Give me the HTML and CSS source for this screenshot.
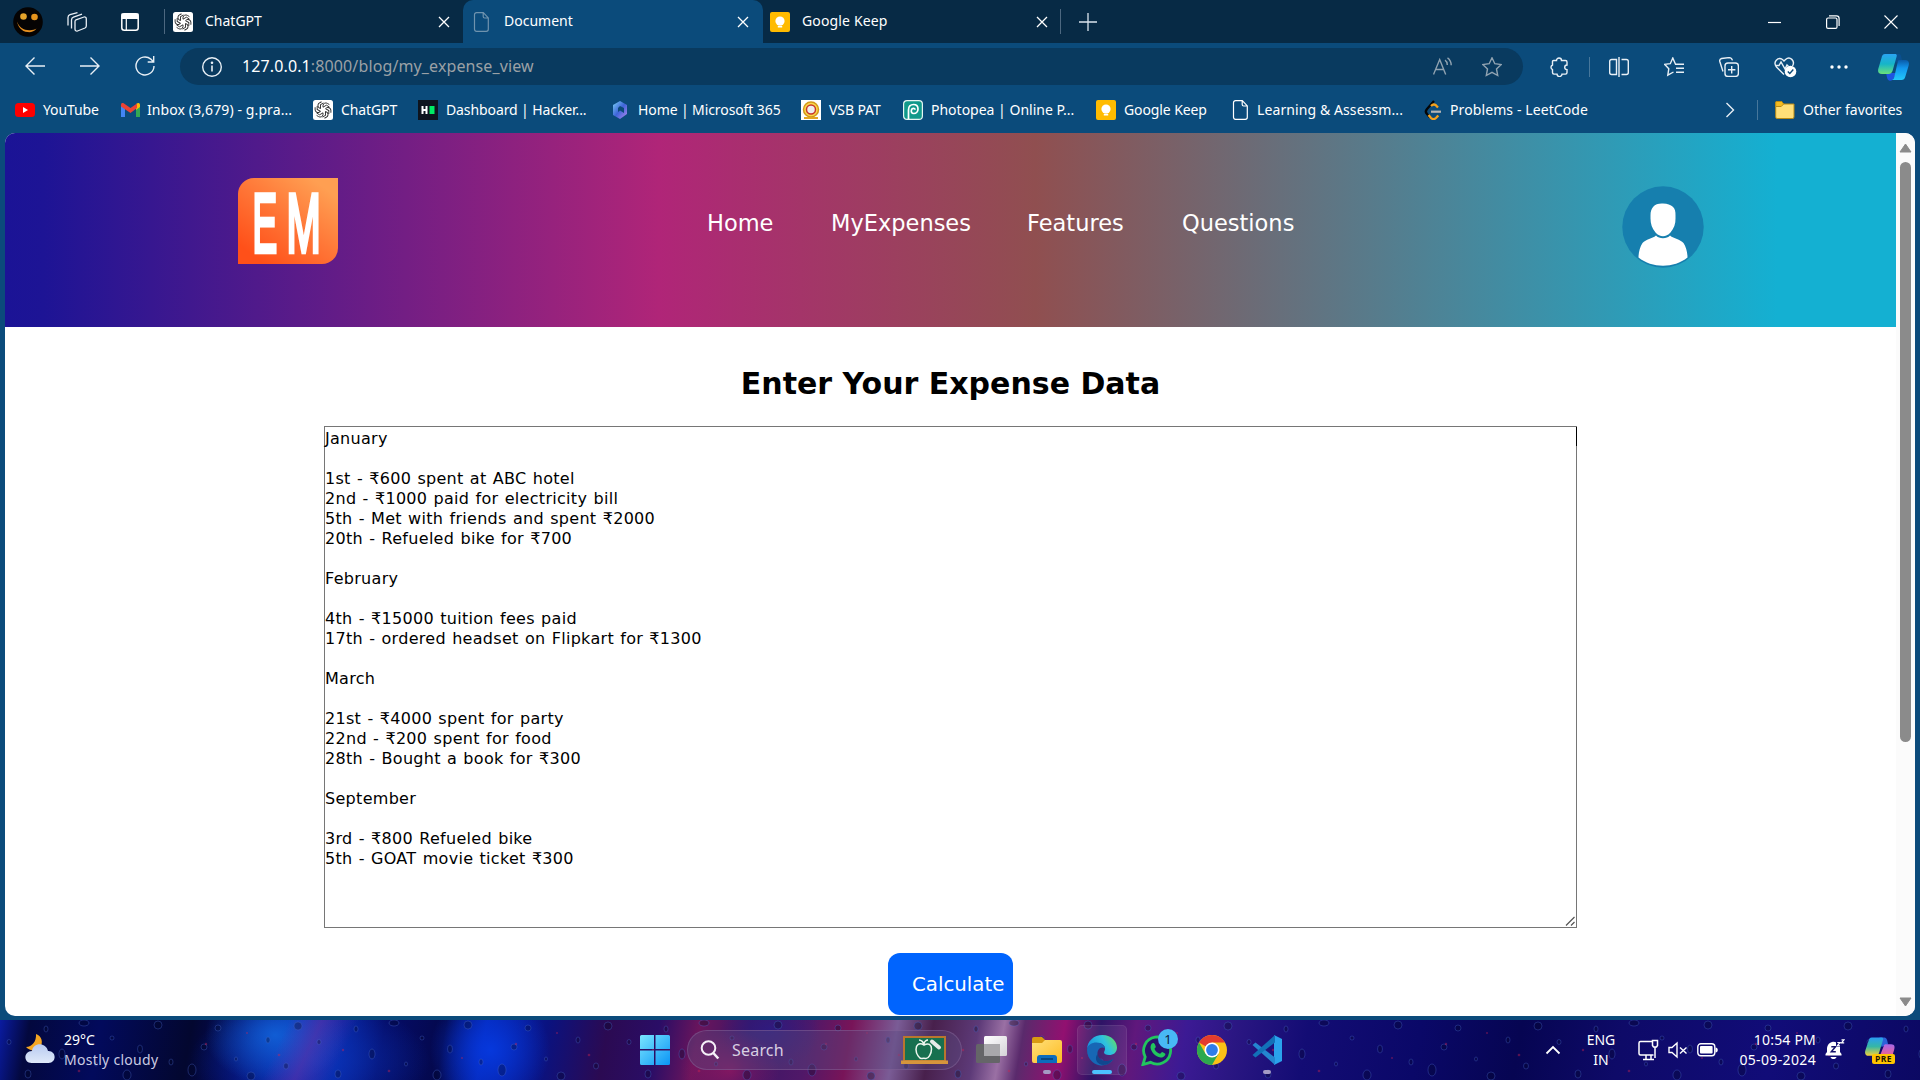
FILE: index.html
```html
<!DOCTYPE html>
<html lang="en">
<head>
<meta charset="utf-8">
<title>Document</title>
<link rel="stylesheet" href="styles.css">
</head>
<body>
<svg width="0" height="0" class="defs">
  <defs>
    <linearGradient id="gLogo" x1="0.15" y1="0.9" x2="0.85" y2="0.1"><stop offset="0" stop-color="#ff5019"/><stop offset=".5" stop-color="#ff7536"/><stop offset="1" stop-color="#ff9f52"/></linearGradient>
    <linearGradient id="gWin" x1="0" y1="0" x2="1" y2="1"><stop offset="0" stop-color="#7ae6ff"/><stop offset="1" stop-color="#0a94f5"/></linearGradient>
    <linearGradient id="gCloud" x1="0" y1="0" x2="0" y2="1"><stop offset="0" stop-color="#b8caf0"/><stop offset="1" stop-color="#dfe9fa"/></linearGradient>
    <linearGradient id="gCopA" x1="0" y1="0" x2="0" y2="1"><stop offset="0" stop-color="#2aa4f2"/><stop offset=".5" stop-color="#16b5c8"/><stop offset="1" stop-color="#6be07a"/></linearGradient>
    <linearGradient id="gCopB" x1="0" y1="0" x2="0" y2="1"><stop offset="0" stop-color="#0a5aa8"/><stop offset=".4" stop-color="#1296ee"/><stop offset="1" stop-color="#24c8fa"/></linearGradient>
    <linearGradient id="gPreA" x1="0" y1="0" x2="0" y2="1"><stop offset="0" stop-color="#2a9df4"/><stop offset=".5" stop-color="#35b7a5"/><stop offset="1" stop-color="#f5d13a"/></linearGradient>
    <linearGradient id="gPreB" x1="0" y1="0" x2="0" y2="1"><stop offset="0" stop-color="#a667e8"/><stop offset="1" stop-color="#f6608a"/></linearGradient>
    <linearGradient id="g365" x1="0" y1="0" x2="1" y2="1"><stop offset="0" stop-color="#7ad0f5"/><stop offset=".5" stop-color="#3e64d8"/><stop offset="1" stop-color="#b487f0"/></linearGradient>
    <linearGradient id="gEdge" x1="0" y1=".6" x2="1" y2=".2"><stop offset="0" stop-color="#168fdc"/><stop offset=".6" stop-color="#2fc2df"/><stop offset="1" stop-color="#62de62"/></linearGradient>
    <linearGradient id="gFold" x1="0" y1="0" x2="1" y2="1"><stop offset="0" stop-color="#ffe07a"/><stop offset="1" stop-color="#fdbb22"/></linearGradient>
    <linearGradient id="gView" x1="0" y1="0" x2="1" y2="1"><stop offset="0" stop-color="#fff"/><stop offset="1" stop-color="#d5d3d8"/></linearGradient>
    <symbol id="gpt" viewBox="0 0 20 20"><rect width="20" height="20" rx="2.5" fill="#fff"/><g fill="none" stroke="#222" stroke-width=".9"><g id="petal"><path d="M10 7.2V5.3a2.9 2.9 0 0 1 4.4-1.9l2 1.2M10 7.2l3.4-2 3 1.8"/></g><use href="#petal" transform="rotate(60 10 10)"/><use href="#petal" transform="rotate(120 10 10)"/><use href="#petal" transform="rotate(180 10 10)"/><use href="#petal" transform="rotate(240 10 10)"/><use href="#petal" transform="rotate(300 10 10)"/></g></symbol>
    <symbol id="keep" viewBox="0 0 20 20"><rect width="20" height="20" rx="2" fill="#ffbb00"/><circle cx="10" cy="9" r="4.6" fill="#fff"/><path d="M7.8 11h4.4v2H7.8zM7.8 13.8h4.4v1.7H7.8z" fill="#fff"/></symbol>
    <symbol id="doc" viewBox="0 0 20 20"><path d="M4.500.7h6.8l5 5.200v11.400a2 2 0 0 1-2 2H4.500a2 2 0 0 1-2-2V2.700a2 2 0 0 1 2-2zM11.200.9v3.600a1.500 1.500 0 0 0 1.500 1.500h3.500" fill="none" stroke="currentColor" stroke-width="1.2"/></symbol>
    <symbol id="x" viewBox="0 0 12 12"><path d="M1 1l10 10M11 1L1 11" stroke="currentColor" stroke-width="1.3" fill="none"/></symbol>
    <pattern id="drops" width="310" height="60" patternUnits="userSpaceOnUse">
      <g fill="#01041f" fill-opacity=".3" stroke="#4a6bd8" stroke-opacity=".4" stroke-width=".8">
        <ellipse cx="9" cy="22" rx="2" ry="2.500"/><ellipse cx="28" cy="54" rx="3" ry="4"/><ellipse cx="46" cy="9" rx="2" ry="3"/><ellipse cx="62" cy="34" rx="3" ry="5"/><ellipse cx="84" cy="3" rx="5" ry="3"/><ellipse cx="96" cy="44" rx="1.500" ry="2"/><ellipse cx="112" cy="18" rx="2" ry="2"/><ellipse cx="127" cy="55" rx="4" ry="5"/><ellipse cx="140" cy="29" rx="2.500" ry="4"/><ellipse cx="158" cy="5" rx="4" ry="4"/><ellipse cx="171" cy="42" rx="2" ry="3"/><ellipse cx="192" cy="50" rx="4" ry="6"/><ellipse cx="204" cy="27" rx="3" ry="3"/><ellipse cx="218" cy="8" rx="3" ry="3"/><ellipse cx="236" cy="39" rx="1.500" ry="2"/><ellipse cx="251" cy="56" rx="4" ry="4"/><ellipse cx="268" cy="20" rx="2" ry="3"/><ellipse cx="286" cy="46" rx="2.500" ry="3"/><ellipse cx="298" cy="6" rx="4" ry="4"/>
      </g>
      <g fill="#d5204e" fill-opacity=".4"><circle cx="33" cy="30" r="1.200"/><circle cx="79" cy="51" r="1.300"/><circle cx="152" cy="38" r="1"/><circle cx="206" cy="24" r="1.200"/><circle cx="247" cy="13" r="1"/><circle cx="279" cy="35" r="1.300"/></g>
    </pattern>
  </defs>
</svg>

<div class="screen">
  <div class="tabstrip">
    <div class="tools">
      <svg class="face" width="30" height="30" viewBox="0 0 30 30"><circle cx="15" cy="15" r="14.800" fill="#050303"/><circle cx="10.500" cy="9.500" r="3.300" fill="#e5a32a"/><circle cx="21.500" cy="10" r="3.300" fill="#e5931c"/><path d="M4 14.500c2 6 7 9 13 8.700 2.500 0 5-.8 6.500-1.700-2 3-5.500 4-9 3.600C8.500 24.300 5 20 4 14.500z" fill="#e58f20"/></svg>
      <svg class="spaces" width="22" height="20" viewBox="0 0 22 20" fill="none" stroke="#e8eef4" stroke-width="1.300"><path d="M9 9.500a2 2 0 0 1 1-1.700L18 5a1.800 1.800 0 0 1 2.300 1.700V14a2.200 2.200 0 0 1-1.300 2l-7.500 3A1.800 1.800 0 0 1 9 17.300zM5.500 16.500V8a3 3 0 0 1 2-2.800L16 2.200M2 13.500V5.500a3 3 0 0 1 2-2.800L11.500.7"/></svg>
      <svg class="acts" width="18" height="18" viewBox="0 0 18 18"><rect x=".8" y=".8" width="16.400" height="16.400" rx="2.500" fill="none" stroke="#fff" stroke-width="1.500"/><path d="M1 1h16v4.500H1zM5.300 5v12" fill="#fff" stroke="#fff" stroke-width="1.200"/></svg>
      <i class="rule"></i>
    </div>
    <div class="tab tab-a"><svg width="20" height="20"><use href="#gpt"/></svg><span>ChatGPT</span><svg class="close" width="12" height="12"><use href="#x"/></svg></div>
    <div class="tab active"><svg class="dim" width="20" height="20"><use href="#doc"/></svg><span>Document</span><svg class="close" width="12" height="12"><use href="#x"/></svg></div>
    <div class="tab tab-c"><svg width="20" height="20"><use href="#keep"/></svg><span>Google Keep</span><svg class="close" width="12" height="12"><use href="#x"/></svg><i class="rule"></i></div>
    <svg class="plus" width="18" height="18" viewBox="0 0 18 18"><path d="M9 0v18M0 9h18" stroke="#dbe5ee" stroke-width="1.300"/></svg>
    <div class="winbtns">
      <svg width="14" height="14" viewBox="0 0 14 14"><path d="M0 7.500h13" stroke="#fff" stroke-width="1.200"/></svg>
      <svg width="14" height="14" viewBox="0 0 14 14" fill="none" stroke="#fff" stroke-width="1.200"><rect x=".6" y="3" width="10.400" height="10.400" rx="1.500"/><path d="M3 .8h7.500a2.600 2.600 0 0 1 2.600 2.600V11"/></svg>
      <svg width="14" height="14" viewBox="0 0 14 14"><path d="M.5.5l13 13M13.500.5l-13 13" stroke="#fff" stroke-width="1.100"/></svg>
    </div>
  </div>

  <div class="toolbar">
    <svg class="nav1" width="20" height="20" viewBox="0 0 20 20"><path d="M9.500 1.500L1 10l8.500 8.500M1 10h19"/></svg>
    <svg class="nav2" width="20" height="20" viewBox="0 0 20 20"><path d="M10.500 1.500L19 10l-8.500 8.500M19 10H0"/></svg>
    <svg class="nav3" width="20" height="20" viewBox="0 0 20 20"><path d="M19 10a9 9 0 1 1-3.200-6.900l2.600 2.600M18.700 0v6h-6"/></svg>
    <div class="address">
      <svg width="20" height="20" viewBox="0 0 20 20"><circle cx="10" cy="10" r="9.300"/><path d="M10 8.500v6" stroke-width="1.600"/><circle cx="10" cy="5.800" r=".6" fill="#fff"/></svg>
      <span class="url"><b>127.0.0.1</b>:8000/blog/my_expense_view</span>
      <svg class="aloud" width="20" height="20" viewBox="0 0 20 20"><path d="M.5 17.500L6.700 2.500l6 15M2.800 12.500h8M12 3.200c1.600 1 2.300 2.500 2.300 4.800M14.500.8c2.500 1.700 3.700 4.400 3.700 7.500"/></svg>
      <svg class="star" width="20" height="20" viewBox="0 0 20 20"><path d="M10 .8l2.800 5.900 6.400.8-4.700 4.500 1.200 6.500L10 15.300 4.300 18.500 5.500 12 .8 7.500l6.400-.8z"/></svg>
    </div>
    <svg class="ext" width="20" height="20" viewBox="0 0 20 20"><path d="M4.500 3.500h3a2.500 2.500 0 0 1 5 0H16.500a1.500 1.500 0 0 1 1.500 1.500v3a2.300 2.300 0 0 0 0 4.600v3a1.500 1.500 0 0 1-1.500 1.500H13a2.500 2.500 0 0 1-5 0H5a1.500 1.500 0 0 1-1.500-1.500v-3a2.500 2.500 0 0 1 0-4.600V4.500a1 1 0 0 1 1-1z"/></svg>
    <i class="sep"></i>
    <svg class="split" width="20" height="20" viewBox="0 0 20 20"><path d="M7.500 2.500H2.700a2 2 0 0 0-2 2v11a2 2 0 0 0 2 2h4.800zM12.500 2.500h4.800a2 2 0 0 1 2 2v11a2 2 0 0 1-2 2h-4.800M10 0v20"/></svg>
    <svg class="favs" width="20" height="20" viewBox="0 0 20 20"><path d="M11.500 7.200L8.800 1 6.300 6.700.6 7.300l4.200 4.400-1 6.500L9.500 15M11 7.300h9M12 11.300h8M12 15.300h8"/></svg>
    <svg class="coll" width="20" height="20" viewBox="0 0 20 20"><rect x="6" y="6" width="13.400" height="13.400" rx="3"/><path d="M12.700 9v7.400M9 12.700h7.400M4 14.500L.8 4.500a2.500 2.500 0 0 1 1.800-3L10 .6c2 0 3 1.200 3.500 2.800"/></svg>
    <svg class="heart" width="23" height="22" viewBox="0 0 23 22"><path d="M10 18.500L2.500 11C-1.500 6 4 .5 8.500 3.500L10 5l1.500-1.500C16-.5 21.500 5 18.500 10M1 9.500h4l2-3.500 4 7 2-4 1.500 1.500"/><circle cx="16.500" cy="15.500" r="5.800" fill="#fff" stroke="none"/><path class="tick" d="M13.800 15.500l2 2 3.500-4"/></svg>
    <svg class="dots" width="18" height="6" viewBox="0 0 18 6"><g fill="#fff" stroke="none"><circle cx="2" cy="3" r="1.700"/><circle cx="9" cy="3" r="1.700"/><circle cx="16" cy="3" r="1.700"/></g></svg>
    <svg class="cop" width="31" height="28" viewBox="0 0 31 28"><g stroke="none"><path d="M15 1h6c2 0 2 2 3 6l-7 3z" fill="#0a4f8e"/><path d="M8 20h10l-2 5c-1 2.500-3 3-5 2.500-2-.8-2-4-3-7.500z" fill="#1e55e0"/><path d="M7 1h10c2 0 2 1.500 1.500 3l-4 14c-.8 2-2 3-4 3H4c-4 0-4.500-3-3.500-6l3-10C4 2.500 5 1 7 1z" fill="url(#gCopA)"/><path d="M21 7h6c4 0 4.500 3 3.500 6l-3 10c-.8 3-2 4-4 4H14c2-.8 2-2 2.500-4l3-13c.3-2 .7-3 1.500-3z" fill="url(#gCopB)"/></g></svg>
  </div>

  <div class="bookmarks">
    <a><svg width="20" height="20"><rect y="3" width="20" height="14" rx="3.500" fill="#f00"/><path d="M8 7l5 3-5 3z" fill="#fff"/></svg><span>YouTube</span></a>
    <a class="wide"><svg width="19" height="20"><path d="M0 5v12h4V8z" fill="#4285f4"/><path d="M19 5v12h-4V8z" fill="#34a853"/><path d="M15 4l2-1c1.500-.5 2 1 2 2v2l-4 3z" fill="#fbbc04"/><path d="M0 5c0-2 1.500-2.500 3-1.500L9.500 8 16 3.500V8l-6.500 5L0 6.500z" fill="#ea4335"/></svg><span>Inbox (3,679) - g.pra...</span></a>
    <a><svg width="20" height="20"><use href="#gpt"/></svg><span>ChatGPT</span></a>
    <a><svg width="20" height="20"><path d="M0 0h20v20H0z" fill="#0e141e"/><path d="M3.500 6H5.500v3h2V6h2v8h-2v-3h-2v3h-2z" fill="#fff"/><path d="M11.500 6h5v8h-5z" fill="#00ea64"/></svg><span>Dashboard | Hacker...</span></a>
    <a><svg width="20" height="20"><path d="M10 1l7 4v9l-7 5-7-4V5z" fill="url(#g365)"/><path d="M10 6l4 2v5l-4-2.500L8 12V8z" fill="#0b4a79"/></svg><span>Home | Microsoft 365</span></a>
    <a><svg width="20" height="20"><path d="M0 0h20v20H0z" fill="#fff"/><circle cx="10" cy="9.500" r="7.500" fill="#fbd84d" stroke="#d49a18" stroke-width="1.500"/><circle cx="10" cy="9.500" r="4.500" fill="#eee" stroke="#c8362c" stroke-width="1.500"/><path d="M3 18h14" stroke="#e2a622" stroke-width="2"/></svg><span>VSB PAT</span></a>
    <a class="mid"><svg width="20" height="20"><rect x=".6" y=".6" width="18.800" height="18.800" rx="3.500" fill="#10998a" stroke="#e5f5f2" stroke-width="1.200"/><path d="M5.500 19V10c0-3.500 2-5.500 5-5.500s4.500 2 4.500 4.500-1.800 4.500-4.200 4.500S8 11.500 8.500 9.800s3.500-2 3.500 0" fill="none" stroke="#fff" stroke-width="1.700"/></svg><span>Photopea | Online P...</span></a>
    <a><svg width="20" height="20"><use href="#keep"/></svg><span>Google Keep</span></a>
    <a class="wide tight"><svg width="20" height="20"><use href="#doc"/></svg><span>Learning &amp; Assessm...</span></a>
    <a class="wide"><svg width="20" height="20"><path d="M11 1L4 9c-1.800 2-1.500 3.500 0 5l3 3.500" fill="none" stroke="#050505" stroke-width="2.300"/><path d="M15 7.500L12.500 5C11 4 9.500 4.500 8 6M5.500 15L8 18c1.500 1.300 3.500 1.300 5 0l2.300-2.600" fill="none" stroke="#f5a11c" stroke-width="2.300"/><path d="M8 11.700h10" stroke="#b5b5b5" stroke-width="2.200"/></svg><span>Problems - LeetCode</span></a>
    <svg class="more" width="10" height="16" viewBox="0 0 10 16"><path d="M1.500 1l7 7-7 7" fill="none" stroke="#e8eef4" stroke-width="1.400"/></svg>
    <i class="bsep"></i>
    <a class="mid"><svg width="20" height="20"><path d="M.7 2.500a1 1 0 0 1 1-1h5l2 2.500H19v13a1.500 1.500 0 0 1-1.500 1.500h-15A1.500 1.500 0 0 1 .7 17z" fill="#ffdf78" stroke="#b98a14"/><path d="M.7 2.500a1 1 0 0 1 1-1h5l2 2.500-2.500 2.500H.7z" fill="#f5bc20" stroke="#b98a14"/></svg><span>Other favorites</span></a>
  </div>

  <div class="viewport">
    <div class="page">
      <header class="hero">
        <svg class="logo" width="100" height="86" viewBox="0 0 100 86"><path d="M16 0h84v70a16 16 0 0 1-16 16H0V16A16 16 0 0 1 16 0z" fill="url(#gLogo)"/><g fill="#fff" stroke="#fff" font-family="Liberation Sans" font-size="84"><text transform="translate(14.500 73.500) scale(.44 1)" stroke-width="4.500">E</text><text transform="translate(48.500 73.500) scale(.49 1)" stroke-width="4.500">M</text></g></svg>
        <nav class="menu"><a class="m1">Home</a><a class="m2">MyExpenses</a><a class="m3">Features</a><a class="m4">Questions</a></nav>
        <svg class="user" width="82" height="82" viewBox="0 0 82 82"><circle cx="41" cy="41" r="40.700" fill="#167fae"/><path d="M41 17.500c9 .5 13 4 12.500 12v3c.2 5-1.500 10-5 14-4.500 5-10.500 5-15 0-3.500-4-5-9-5-14v-3c0-8 4-12.500 12.500-12z" fill="#fff"/><path d="M34 49.500c3 3.500 11 3.500 14 0 4 3.500 10 3.500 13.500 7.500 2.500 4 4 9 4 14.500C52 82.500 30 82.500 16.500 71.500c0-5.500 1.500-10.500 4-14.500 3.500-4 9.500-4 13.500-7.500z" fill="#fff"/></svg>
      </header>
      <main class="main">
        <h1>Enter Your Expense Data</h1>
        <div class="entry"><pre>January

1st - ₹600 spent at ABC hotel
2nd - ₹1000 paid for electricity bill
5th - Met with friends and spent ₹2000
20th - Refueled bike for ₹700

February

4th - ₹15000 tuition fees paid
17th - ordered headset on Flipkart for ₹1300

March

21st - ₹4000 spent for party
22nd - ₹200 spent for food
28th - Bought a book for ₹300

September

3rd - ₹800 Refueled bike
5th - GOAT movie ticket ₹300</pre><i class="caret"></i><svg class="grip" width="10" height="10"><path d="M1 9.500L9.500 1M6 9.500L9.500 6" stroke="#555" stroke-width="1.200"/></svg></div>
        <div class="calc"><span>Calculate</span></div>
      </main>
    </div>
    <div class="scroll">
      <svg width="13" height="10" viewBox="0 0 13 10"><path d="M6.500 1L12 9H1z" fill="#8b8b8b" stroke="#8b8b8b" stroke-linejoin="round"/></svg>
      <i class="thumb"></i>
      <svg class="down" width="13" height="10" viewBox="0 0 13 10"><path d="M6.500 9L12 1H1z" fill="#8b8b8b" stroke="#8b8b8b" stroke-linejoin="round"/></svg>
    </div>
  </div>

  <div class="taskbar">
    <svg class="rain" width="1920" height="60"><rect width="1920" height="60" fill="url(#drops)"/></svg>
    <div class="weather">
      <svg width="32" height="32" viewBox="0 0 32 32"><path d="M12 1c6 2 7.500 9 4 13.500-3 4-10 4-14-.5 6-.5 10.500-5 10-13z" fill="#f5a623"/><path d="M7.500 30C-1 30-.5 18 8 18c1-9 14-9 16 0 8.500-.5 9 12 .500 12z" fill="url(#gCloud)"/></svg>
      <div><p class="t1">29°C</p><p class="t2">Mostly cloudy</p></div>
    </div>
    <div class="apps">
      <svg class="start" width="30" height="30" viewBox="0 0 30 30"><path d="M0 1.500A1.500 1.500 0 0 1 1.500 0H14v14H0zM15.500 0h13A1.500 1.500 0 0 1 30 1.500V14H15.500zM0 15.500h14V30H1.500A1.500 1.500 0 0 1 0 28.500zM15.500 15.500H30v13a1.500 1.500 0 0 1-1.500 1.500h-13z" fill="url(#gWin)"/></svg>
      <div class="search">
        <svg width="20" height="20" viewBox="0 0 20 20" fill="none" stroke="#f5f0f8" stroke-width="2"><circle cx="8.500" cy="8" r="6.800"/><path d="M13.300 13l5 5.500" stroke-width="2.600"/></svg>
        <span>Search</span>
        <svg class="board" width="48" height="28" viewBox="0 0 48 28"><path d="M2 0h43v26H2z" fill="#b9762e"/><path d="M4 2h39v22H4z" fill="#17704f"/><path d="M0 24.500h47V28H0z" fill="#d6953c"/><path d="M23 9c-5-3-8 0-8 4.500S18.500 23 21 22.500c1.500-.5 2-.5 3.500 0 3 .5 6-5 6-9.500S27.500 6.500 23 9zM23 9c0-3-3-5-5-5M23 8c0-2 2-4 4-4" fill="none" stroke="#eef7ee" stroke-width="1.500"/><path d="M31 5.500l7 6" stroke="#e8ece8" stroke-width="4" stroke-linecap="round"/></svg>
      </div>
      <div class="app view"><svg width="32" height="32" viewBox="0 0 32 32"><rect y="10" width="24" height="19" rx="1.500" fill="#656568"/><rect x="8" y="2" width="23" height="20" rx="1.500" fill="url(#gView)"/><path d="M8 10h16v12H8z" fill="#a9a8ac"/></svg></div>
      <div class="app on"><svg width="32" height="32" viewBox="0 0 32 32"><path d="M1 5a2 2 0 0 1 2-2h8l3 3v6H1z" fill="#d99a12"/><path d="M1 9h10l3-3h15a2 2 0 0 1 2 2v19a2 2 0 0 1-2 2H3a2 2 0 0 1-2-2z" fill="url(#gFold)"/><path d="M6 29v-5a3 3 0 0 1 3-3h14a3 3 0 0 1 3 3v5z" fill="#0c6cbd"/><path d="M10 25h12" stroke="#063d72" stroke-width="1.500"/></svg></div>
      <div class="app cur"><svg width="32" height="32" viewBox="0 0 32 32"><path d="M1 16C1 7 8 1 16.500 1 26 1 31 8 31 13.500c0 5-3.500 7.500-8 7.500-3 0-5-1-5-2.500 0-1 1-1.500 1-4C19 11 15 9 11.500 9 6 9 1 12 1 16z" fill="url(#gEdge)"/><path d="M1 16c0-5 5-7.500 9.500-7.500 5 0 8.500 3 8.500 6-4-3-8 1-7.500 6 .6 6 8 9 16 4.500C22 33 12 33 6.500 28 3 25 1 21 1 16z" fill="#1767b5"/><path d="M11.500 20c.6 6 8 9.500 16 5-5 7-11 6.500-14 5-4-2-4.500-7-2-10z" fill="#10478f"/></svg></div>
      <div class="app"><svg width="32" height="32" viewBox="0 0 32 32"><path d="M2 30.500l2.200-7.600A13.500 13.500 0 1 1 9.500 28.300z" fill="#100c5c" fill-opacity=".6" stroke="#22c55e" stroke-width="2.800"/><path d="M11 9.500c1-1 2.500-.5 3 1l.8 2.200c0 1-1.500 1.500-1.300 2.300 1.200 2.500 3 4 5.300 4.800 1 0 1.500-1.800 2.500-1.800l2.700 1.500c1.300 1-1 4.300-4.500 4-5-.8-9.500-5.500-10-10 0-1.800.5-3 1.500-4z" fill="#22c55e"/></svg><b class="count">1</b></div>
      <div class="app"><svg width="32" height="32" viewBox="0 0 32 32"><circle cx="16" cy="16" r="15" fill="#fbc116"/><path d="M16 16L3 8.500A15 15 0 0 1 29 8.500H16z" fill="#e33b2e"/><path d="M16 16L9.500 19.800 3 8.500A15 15 0 0 0 16 31l6.500-11.300z" fill="#2da94f"/><circle cx="16" cy="16" r="7.500" fill="#fff"/><circle cx="16" cy="16" r="5.900" fill="#2f7de9"/></svg></div>
      <div class="app on"><svg width="32" height="32" viewBox="0 0 32 32"><path d="M23 1l8 4v22l-8 4z" fill="#2aa2ec"/><path d="M1.500 11l3-2.500L24 23.500V31z" fill="#2486d0"/><path d="M1.500 21l3 2.500L24 8.500V1z" fill="#1271b8"/></svg></div>
    </div>
    <div class="tray">
      <svg class="chev" width="16" height="10" viewBox="0 0 16 10"><path d="M1.500 8.500L8 2l6.500 6.500" fill="none" stroke="#fff" stroke-width="1.800"/></svg>
      <div class="lang"><p>ENG</p><p>IN</p></div>
      <svg class="net" width="22" height="22" viewBox="0 0 22 22" fill="none" stroke="#fff" stroke-width="1.500"><path d="M14 2.500H2.500a1.500 1.500 0 0 0-1.500 1.500v10.500A1.500 1.500 0 0 0 2.500 16h13M5 20.500h11M8 16v4M13 16v4"/><path d="M14.500 1.500h5v5l-1 1.500h-3l-1-1.500zM17 8v11"/></svg>
      <svg class="vol" width="20" height="18" viewBox="0 0 20 18" fill="none" stroke="#fff" stroke-width="1.400"><path d="M1 6.500h3L9 2v14l-5-4.500H1zM12 6.500l6.500 6M18.500 6.500l-6.500 6"/></svg>
      <svg class="bat" width="22" height="14" viewBox="0 0 22 14"><rect x=".8" y=".8" width="17" height="12" rx="3" fill="none" stroke="#fff" stroke-width="1.400"/><rect x="3" y="3" width="12.600" height="7.600" rx="1" fill="#fff"/><path d="M18.500 4.500c3 0 3 5 0 5z" fill="#fff"/></svg>
      <div class="clock"><p>10:54 PM</p><p class="date">05-09-2024</p></div>
      <svg class="bell" width="20" height="22" viewBox="0 0 20 22"><path d="M.5 16.500V15L2 13V9.500a6.700 6.700 0 0 1 9-6.300V8h4v5l1.500 2v1.500zM5.500 18h6c-.7 2.700-5.300 2.700-6 0z" fill="#fff"/><path d="M6.300 7.800h4.200l-4.200 5h4.500" fill="none" stroke="#15126a" stroke-width="1.500"/><path d="M12.300 3.500h2.700l-2.700 3.300H15M16.500.8h2.500l-2.500 3h2.700" fill="none" stroke="#fff" stroke-width="1.200"/></svg>
      <div class="pre"><svg width="30" height="28" viewBox="0 0 31 28"><path d="M15 1h5c3 0 3 4 4 7l-7 3z" fill="#2b62d8"/><path d="M7 1h10c2 0 2 1.500 1.500 3l-4 13c-.8 2-2 3-4 3H4c-4 0-4.500-3-3.500-6l3-9C4 2.500 5 1 7 1z" fill="url(#gPreA)"/><path d="M21 8h6c4 0 4 3 3 6l-2 7H15l4-10c.5-2 1-3 2-3z" fill="url(#gPreB)"/></svg><b>PRE</b></div>
    </div>
  </div>
</div>
</body>
</html>
```
FILE: styles.css
```css
* { box-sizing: border-box; }
body { margin: 0; background: #0b4a79; overflow: hidden; }
p, h1, pre { margin: 0; }
svg { display: block; flex: none; }
.defs { position: absolute; }

.screen {
  width: 1920px; height: 1080px;
  display: flex; flex-direction: column;
  font: 14px "Noto Sans", sans-serif;
  color: #fff; background: #0b4b7b;
}

/* tab strip */
.tabstrip { height: 43px; display: flex; align-items: center; background: #072a45; flex: none; }
.tools { width: 165px; display: flex; align-items: center; padding-left: 13px; }
.spaces { margin-left: 23px; }
.acts { margin-left: 33px; }
.tools .rule { margin-left: 25px; }
.rule { width: 1px; height: 25px; background: #4d6880; flex: none; }
.tab { height: 43px; display: flex; align-items: center; gap: 12px; }
.tab span { line-height: 20px; margin-top: -2px; letter-spacing: 0; white-space: nowrap; }
.tab-a { width: 298px; padding: 0 13px 0 8px; }
.active { width: 300px; padding: 0 14px 0 9px; background: #0b4b7b; border-radius: 10px 10px 0 0; }
.tab-c { width: 298px; padding-left: 7px; }
.tab-c span { letter-spacing: .15px; }
.close { margin-left: auto; }
.dim { color: #6f93ae; }
.plus { margin-left: 18px; }
.winbtns { margin-left: auto; display: flex; gap: 44px; padding-right: 22px; }

/* toolbar */
.toolbar { height: 47px; display: flex; align-items: center; padding: 0 11px 0 25px; flex: none; }
.toolbar svg { fill: none; stroke: #e9f0f6; stroke-width: 1.4; }
.toolbar .tick { stroke: #0b4a79; }
.nav2, .nav3 { margin-left: 35px; }
.nav1, .nav2, .nav3 { margin-top: -1px; }
.address { margin-left: 25px; width: 1343px; height: 37px; border-radius: 19px; background: #093a5f; display: flex; align-items: center; padding: 0 21px 0 22px; }
.url { margin-left: 20px; margin-top: -1px; font-size: 16px; color: #9ba1a6; letter-spacing: .12px; white-space: nowrap; }
.url b { font-weight: 400; color: #fff; }
.address .aloud, .address .star { stroke: #91a3b1; }
.aloud { margin-left: auto; }
.star { margin-left: 29px; }
.ext { margin-left: 26px; }
.sep { width: 1px; height: 20px; background: #47779b; margin: 0 19px 0 20px; flex: none; }
.favs, .coll, .heart { margin-left: 35px; }
.dots { margin-left: 33px; }
.cop { margin-left: auto; }

/* favourites bar */
.bookmarks { height: 43px; display: grid; align-items: center; flex: none; padding: 0 0 3px 15px;
  grid-template-columns: 106px 192px 105px 192px 191px 102px 193px 135px 192px 302px 32px 18px auto; }
.bookmarks a { display: flex; align-items: center; gap: 8px; white-space: nowrap; letter-spacing: -.1px; }
.bookmarks span { margin-top: -1px; }
.bookmarks .mid { letter-spacing: 0; }
.bookmarks .wide { letter-spacing: .1px; gap: 7px; }
.bookmarks .tight { gap: 6px; }
.bsep { width: 1px; height: 20px; background: #47779b; }

/* page viewport */
.viewport { height: 883px; width: 1910px; margin-left: 5px; display: flex; border-radius: 10px; overflow: hidden; background: #fff; flex: none; }
.page { width: 1891px; font-family: "DejaVu Sans", sans-serif; color: #000; }
.hero { height: 194px; display: flex; align-items: flex-start; padding: 45px 192px 0 233px;
  background: linear-gradient(90deg, #1b1396 0, #1d1495 2%, #b02578 34.600%, #904f50 54.500%, #14b0d2 93.700%); }
.logo { overflow: visible; }
.menu { display: flex; margin: 30px 0 0 369px; color: #fff; font-size: 22.5px; line-height: 30px; }
.m1 { width: 124px; }
.m2 { width: 196px; }
.m3 { width: 155px; }
.user { margin: 8px 0 0 auto; }
.main { display: flex; flex-direction: column; align-items: center; }
h1 { margin-top: 37px; font-size: 30px; line-height: 40px; font-weight: 700; white-space: nowrap; }
.entry { position: relative; margin-top: 22px; width: 1253px; height: 502px; border: 1px solid #767676; padding: 2px 0 0; }
.entry pre { font: 16px/20px "DejaVu Sans", sans-serif; letter-spacing: .3px; word-spacing: .85px; }
.caret { position: absolute; right: -1px; top: 0; width: 1px; height: 19px; background: #000; }
.grip { position: absolute; right: 1px; bottom: 1px; }
.calc { width: 125px; height: 62px; margin-top: 25px; border-radius: 12px; background: #0064fe; color: #fff; padding: 1px 0 0 24px; font-size: 19.800px; line-height: 62px; }
.scroll { width: 19px; background: #fbfbfb; display: flex; flex-direction: column; align-items: center; padding: 10px 0 9px; }
.thumb { width: 11px; height: 580px; margin-top: 9px; border-radius: 6px; background: #8b8b8b; }
.down { margin-top: auto; }

/* taskbar */
.taskbar { position: relative; margin-top: auto; height: 60px; display: flex; flex: none;
  background:
    linear-gradient(115deg, transparent 262px, #6a2aa088 292px, transparent 325px),
    radial-gradient(70px 50px at 275px 15px, #1265dcdd, transparent),
    radial-gradient(120px 60px at 310px 40px, #0a38c0cc, transparent),
    radial-gradient(60px 60px at 490px 30px, #0638dc, transparent),
    radial-gradient(50px 40px at 730px 50px, #a01860aa, transparent),
    radial-gradient(50px 40px at 770px 10px, #2a1c84cc, transparent),
    linear-gradient(100deg, #0a1ba0 0, #03083e 30px, #020a5c 100px, #03072f 190px, #040a60 240px, #0a2cb0 300px, #08229c 340px, #050c68 380px, #04084c 440px, #0525b4 480px, #0a1280 540px, #2b0a52 600px, #2a0d66 650px, #6a155c 690px, #3a1566 740px, #501868 800px, #781458 840px, #7a5c96 885px, #48204c 920px, #5d3a78 965px, #9a70a4 990px, #5a2a6c 1010px, #921070 1050px, #2e1466 1085px, #60187c 1120px, #3c1a94 1170px, #2a1682 1220px, #130c74 1290px, #0a0868 1400px, #060552 1500px, #0e0a68 1600px, #110c78 1750px, #0b0860 1920px); }
.rain { position: absolute; left: 0; top: 0; }
.taskbar > div { position: relative; }
.weather { width: 640px; padding-left: 24px; display: flex; align-items: center; gap: 8px; }
.weather p { line-height: 20px; }
.t2 { color: #c9cbe2; letter-spacing: .3px; }
.weather svg { margin-top: -2px; }
.apps { display: flex; align-items: center; }
.search { width: 275px; height: 40px; margin: 0 5px 0 17px; border-radius: 20px; background: #5a4a8066; border: 1px solid #8a6c9c70; display: flex; align-items: center; padding: 0 12px 0 12px; font-size: 16px; }
.search span { margin-left: 12px; color: #d9cfe2; letter-spacing: .2px; }
.board { margin-left: auto; }
.app { position: relative; width: 50px; height: 50px; margin-right: 5px; border-radius: 5px; display: flex; align-items: center; justify-content: center; }
.cur { background: #ffffff14; border: 1px solid #ffffff12; }
.on::after, .cur::after { content: ""; position: absolute; bottom: 1px; left: 21px; width: 8px; height: 4px; border-radius: 2px; background: #a59ac4; }
.cur::after { left: 14px; width: 20px; bottom: 0; background: #4cc2ff; }
.count { position: absolute; left: 26px; top: 4px; width: 20px; height: 20px; border-radius: 50%; background: #48b9f5; color: #0a1a3c; font: 13px/20px "Noto Sans", sans-serif; text-align: center; }
.tray { margin-left: auto; display: flex; align-items: center; padding-right: 25px; line-height: 20px; }
.lang { width: 40px; margin-left: 20px; text-align: center; }
.net { margin-left: 17px; }
.vol { margin-left: 8px; }
.bat { margin-left: 9px; }
.clock { width: 97px; text-align: right; white-space: nowrap; letter-spacing: .2px; }
.date { letter-spacing: .35px; }
.bell { margin-left: 9px; }
.pre { position: relative; margin-left: 20px; }
.pre b { position: absolute; left: 7px; top: 18px; width: 23px; height: 10px; border-radius: 2px; background: #ffc400; color: #1c1400; font: 700 8.500px/10px "Open Sans", sans-serif; letter-spacing: .4px; text-align: center; }
```
